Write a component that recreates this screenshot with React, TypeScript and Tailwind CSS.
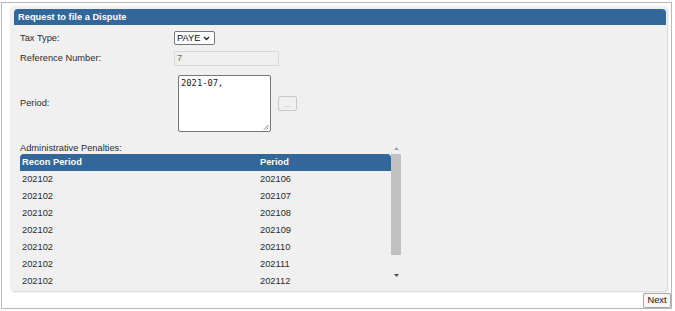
const rows = [
  ["202102", "202106"],
  ["202102", "202107"],
  ["202102", "202108"],
  ["202102", "202109"],
  ["202102", "202110"],
  ["202102", "202111"],
  ["202102", "202112"],
]

function FormRow({ label, children, className = "" }: { label: string; children: React.ReactNode; className?: string }) {
  return (
    <div className={`grid grid-cols-[154px_1fr] items-center ${className}`}>
      <span className="leading-[11px]">{label}</span>
      <div className="flex items-center">{children}</div>
    </div>
  )
}

function Scrollbar() {
  return (
    <div className="w-[10px] flex flex-col items-center">
      <div className="h-[11px] w-full flex items-center justify-center">
        <svg width="5" height="3" viewBox="0 0 5 3">
          <path d="M0 3 L2.5 0 L5 3 Z" fill="#a3a3a3" />
        </svg>
      </div>
      <div className="h-[101px] w-full bg-[#c1c1c1]" />
      <div className="h-[15px]" />
      <div className="h-[11px] w-full flex items-center justify-center">
        <svg width="5" height="3" viewBox="0 0 5 3">
          <path d="M0 0 L5 0 L2.5 3 Z" fill="#505050" />
        </svg>
      </div>
    </div>
  )
}

export default function App() {
  return (
    <div className="w-[675px] h-[311px] bg-white overflow-hidden text-[9.3px] text-[#2b2b2b] font-['Liberation_Sans',Arial,sans-serif]">
      <div className="ml-[1px] mt-[2px] w-[671px] h-[307px] border border-[#b9b9b9] flex flex-col">
        <div className="ml-[8px] mt-[3px] w-[657px] h-[286px] bg-[#f0f0f0] rounded-[4px] shadow-[1px_1px_2px_rgba(0,0,0,0.18)] pt-[3px] pl-[4px] pr-[1px]">
          <div className="h-[16px] bg-[#336699] rounded-t-[4px] text-white font-bold pl-[4px] leading-[16px]">
            Request to file a Dispute
          </div>

          <div className="pl-[6px]">
            <FormRow label="Tax Type:" className="mt-[6px]">
              <div className="h-[14px] w-[41px] bg-white border border-[#767676] rounded-[2px] flex items-center pl-[2px] gap-[3px] text-[#111]">
                <span className="leading-[12px]">PAYE</span>
                <svg width="7" height="5" viewBox="0 0 7 5">
                  <path d="M1 1 L3.5 3.5 L6 1" stroke="#222" strokeWidth="1.4" fill="none" />
                </svg>
              </div>
            </FormRow>

            <FormRow label="Reference Number:" className="mt-[6px]">
              <div className="h-[15px] w-[105px] bg-[#efefef] border border-[#d7d7d7] rounded-[1px] pl-[2px] leading-[13px] text-[#6d6d6d]">
                7
              </div>
            </FormRow>

            <FormRow label="Period:" className="mt-[9px]">
              <div className="relative ml-[4px] h-[57px] w-[93px] bg-white border border-[#767676] rounded-[2px] px-[2px] pt-[1px] font-['DejaVu_Sans_Mono',monospace] text-[8.8px] text-[#222] leading-[12px]">
                2021-07,
                <svg className="absolute right-[1px] bottom-[1px]" width="6" height="6" viewBox="0 0 6 6">
                  <path d="M5.5 1 L1 5.5 M5.5 3.5 L3.5 5.5" stroke="#777" strokeWidth="0.9" />
                </svg>
              </div>
              <div className="ml-[7px] h-[15px] w-[19px] border border-[#c9c9c9] rounded-[2px] bg-[#f0f0f0] flex items-end justify-center text-[7px] text-[#9a9a9a] leading-[10px]">
                ...
              </div>
            </FormRow>

            <div className="mt-[11px] h-[145px] w-[381px] flex overflow-hidden">
              <div className="w-[371px]">
                <div className="h-[11px] leading-[11px]">Administrative Penalties:</div>
                <div className="h-[17px] bg-[#336699] rounded-t-[4px] grid grid-cols-[238px_1fr] pl-[2px] items-center text-white font-bold leading-[17px]">
                  <span>Recon Period</span>
                  <span>Period</span>
                </div>
                {rows.map(([recon, period], i) => (
                  <div key={i} className="h-[17px] grid grid-cols-[238px_1fr] pl-[2px] items-center leading-[17px]">
                    <span>{recon}</span>
                    <span>{period}</span>
                  </div>
                ))}
              </div>
              <Scrollbar />
            </div>
          </div>
        </div>

        <div className="flex justify-end mt-[2px]">
          <div className="h-[15px] w-[28px] border border-[#a9a9a9] rounded-[2px] bg-[#f7f7f7] flex items-center justify-center text-[#111] leading-[13px] shadow-[0_0_1px_rgba(0,0,0,0.2)]">
            Next
          </div>
        </div>
      </div>
    </div>
  )
}
